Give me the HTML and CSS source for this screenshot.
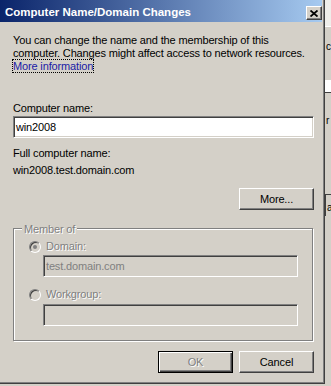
FILE: index.html
```html
<!DOCTYPE html>
<html lang="en">
<head>
    <meta charset="UTF-8">
    <title>Computer Name/Domain Changes</title>
    <link rel="stylesheet" href="styles.css">
</head>
<body>
    <div class="screen">
        <div class="dialog">
            <div class="titlebar">
                <span class="title">Computer Name/Domain Changes</span>
                <button class="close" type="button" aria-label="Close">
                    <svg width="8" height="7" viewBox="0 0 8 7">
                        <path d="M0.5 0.5 L7.5 6.5 M7.5 0.5 L0.5 6.5" stroke="#000" stroke-width="1.8" fill="none"/>
                    </svg>
                </button>
            </div>
            <div class="content">
                <p class="intro">
                    You can change the name and the membership of this<br>
                    computer. Changes might affect access to network resources.<br>
                    <a class="link" href="#">More information</a>
                </p>

                <div class="label name-label">Computer name:</div>
                <div class="edit">win2008</div>

                <div class="label full-label">Full computer name:</div>
                <div class="label full-value">win2008.test.domain.com</div>

                <div class="more-row">
                    <button class="btn" type="button">More...</button>
                </div>

                <div class="group">
                    <span class="legend">Member of</span>
                    <div class="radio-row">
                        <span class="radio checked"></span>
                        <span class="muted">Domain:</span>
                    </div>
                    <div class="edit disabled">test.domain.com</div>
                    <div class="radio-row second">
                        <span class="radio"></span>
                        <span class="muted">Workgroup:</span>
                    </div>
                    <div class="edit disabled workgroup"></div>
                </div>

                <div class="actions">
                    <button class="btn default" type="button" disabled><span class="muted">OK</span></button>
                    <button class="btn" type="button">Cancel</button>
                </div>
            </div>
        </div>

        <!-- window behind the dialog -->
        <div class="behind">
            <div class="behind-top"></div>
            <div class="behind-text first">c</div>
            <div class="behind-box"></div>
            <div class="behind-text second">r</div>
            <div class="behind-btn">a</div>
        </div>
    </div>
</body>
</html>
```

FILE: styles.css
```css
* {
    box-sizing: border-box;
}
body {
    margin: 0;
    font-family: "Liberation Sans", Arial, sans-serif;
    font-size: 11px;
    line-height: 13px;
    letter-spacing: -0.15px;
    color: #000;
    background-color: #d4d0c8;
}
.screen {
    display: flex;
    width: 331px;
    height: 386px;
    overflow: hidden;
}
.dialog {
    width: 325px;
    height: 384px;
    flex-shrink: 0;
    display: flex;
    flex-direction: column;
    background-color: #d4d0c8;
    border-right: 1px solid #404040;
    border-bottom: 1px solid #404040;
    box-shadow: inset -1px -1px 0 #808080;
    padding: 0 2px 2px 0;
}
.titlebar {
    height: 22px;
    display: flex;
    align-items: flex-start;
    justify-content: space-between;
    padding: 6px 0 0 5px;
    background: linear-gradient(to right, #0a246a, #a6caf0);
}
.title {
    color: #fff;
    font-weight: bold;
    font-size: 11.5px;
    letter-spacing: 0;
}
.close {
    width: 16px;
    height: 14px;
    padding: 0;
    display: flex;
    align-items: center;
    justify-content: center;
    background-color: #d4d0c8;
    border: 1px solid;
    border-color: #fff #404040 #404040 #fff;
    box-shadow: inset -1px -1px 0 #808080;
}
.content {
    flex: 1;
    padding: 12px 8px 0 13px;
}
.intro {
    margin: 0;
}
.link {
    color: #1a1aa6;
    text-decoration: none;
    outline: 1px dotted #000;
    outline-offset: 0;
}
.name-label {
    margin-top: 29px;
}
.edit {
    height: 22px;
    margin-top: 1px;
    padding-left: 2px;
    display: flex;
    align-items: center;
    background-color: #fff;
    border: 1px solid;
    border-color: #808080 #fff #fff #808080;
    box-shadow: inset 1px 1px 0 #404040, inset -1px -1px 0 #d4d0c8;
}
.edit.disabled {
    background-color: #d4d0c8;
    color: #808080;
    margin-top: 2px;
}
.edit.workgroup {
    margin-top: 3px;
}
.full-label {
    margin-top: 9px;
}
.full-value {
    margin-top: 4px;
}
.more-row {
    margin-top: 11px;
    display: flex;
    justify-content: flex-end;
}
.btn {
    width: 75px;
    height: 22px;
    padding: 0;
    font-family: inherit;
    font-size: 11px;
    letter-spacing: inherit;
    color: #000;
    background-color: #d4d0c8;
    border: 1px solid;
    border-color: #fff #404040 #404040 #fff;
    box-shadow: inset -1px -1px 0 #808080;
}
.btn.default {
    border: 1px solid #000;
    box-shadow: inset 1px 1px 0 #fff, inset -1px -1px 0 #404040, inset -2px -2px 0 #808080;
}
.muted {
    color: #808080;
    text-shadow: 1px 1px 0 #fff;
}
.group {
    position: relative;
    margin-top: 18px;
    height: 113px;
    padding: 11px 14px 0 15px;
    border: 1px solid #808080;
    box-shadow: inset 1px 1px 0 #fff, 1px 1px 0 #fff;
    margin-right: 1px;
}
.legend {
    position: absolute;
    top: -6px;
    left: 8px;
    padding: 0 2px;
    background-color: #d4d0c8;
    color: #808080;
    text-shadow: 1px 1px 0 #fff;
}
.radio-row {
    display: flex;
    align-items: center;
    gap: 5px;
    height: 13px;
}
.radio-row.second {
    margin-top: 11px;
}
.radio {
    position: relative;
    width: 12px;
    height: 12px;
    border-radius: 50%;
    border: 1px solid;
    border-color: #808080 #fff #fff #808080;
    box-shadow: inset 1px 1px 0 #404040, inset -1px -1px 0 #d4d0c8;
    background-color: #d4d0c8;
}
.radio.checked::after {
    content: "";
    position: absolute;
    left: 3px;
    top: 3px;
    width: 4px;
    height: 4px;
    border-radius: 50%;
    background-color: #808080;
}
.group .edit {
    margin-left: 14px;
}
.actions {
    margin-top: 10px;
    display: flex;
    justify-content: flex-end;
    gap: 6px;
}
.behind {
    flex: 1;
    display: flex;
    flex-direction: column;
    overflow: hidden;
    background-color: #d4d0c8;
}
.behind-top {
    height: 27px;
    flex-shrink: 0;
    background-color: #efeeea;
    border-bottom: 1px solid #fff;
}
.behind-text {
    padding-left: 1px;
    font-size: 10px;
    white-space: nowrap;
}
.behind-text.first {
    margin-top: 13px;
}
.behind-box {
    height: 13px;
    margin-top: 27px;
    background-color: #fff;
    border-bottom: 1px solid #404040;
}
.behind-text.second {
    margin-top: 21px;
}
.behind-btn {
    margin-top: 67px;
    height: 22px;
    padding: 6px 0 0 1px;
    font-size: 10px;
    white-space: nowrap;
    border-top: 1px solid #404040;
    border-left: 1px solid #404040;
    background-color: #d4d0c8;
}
```
